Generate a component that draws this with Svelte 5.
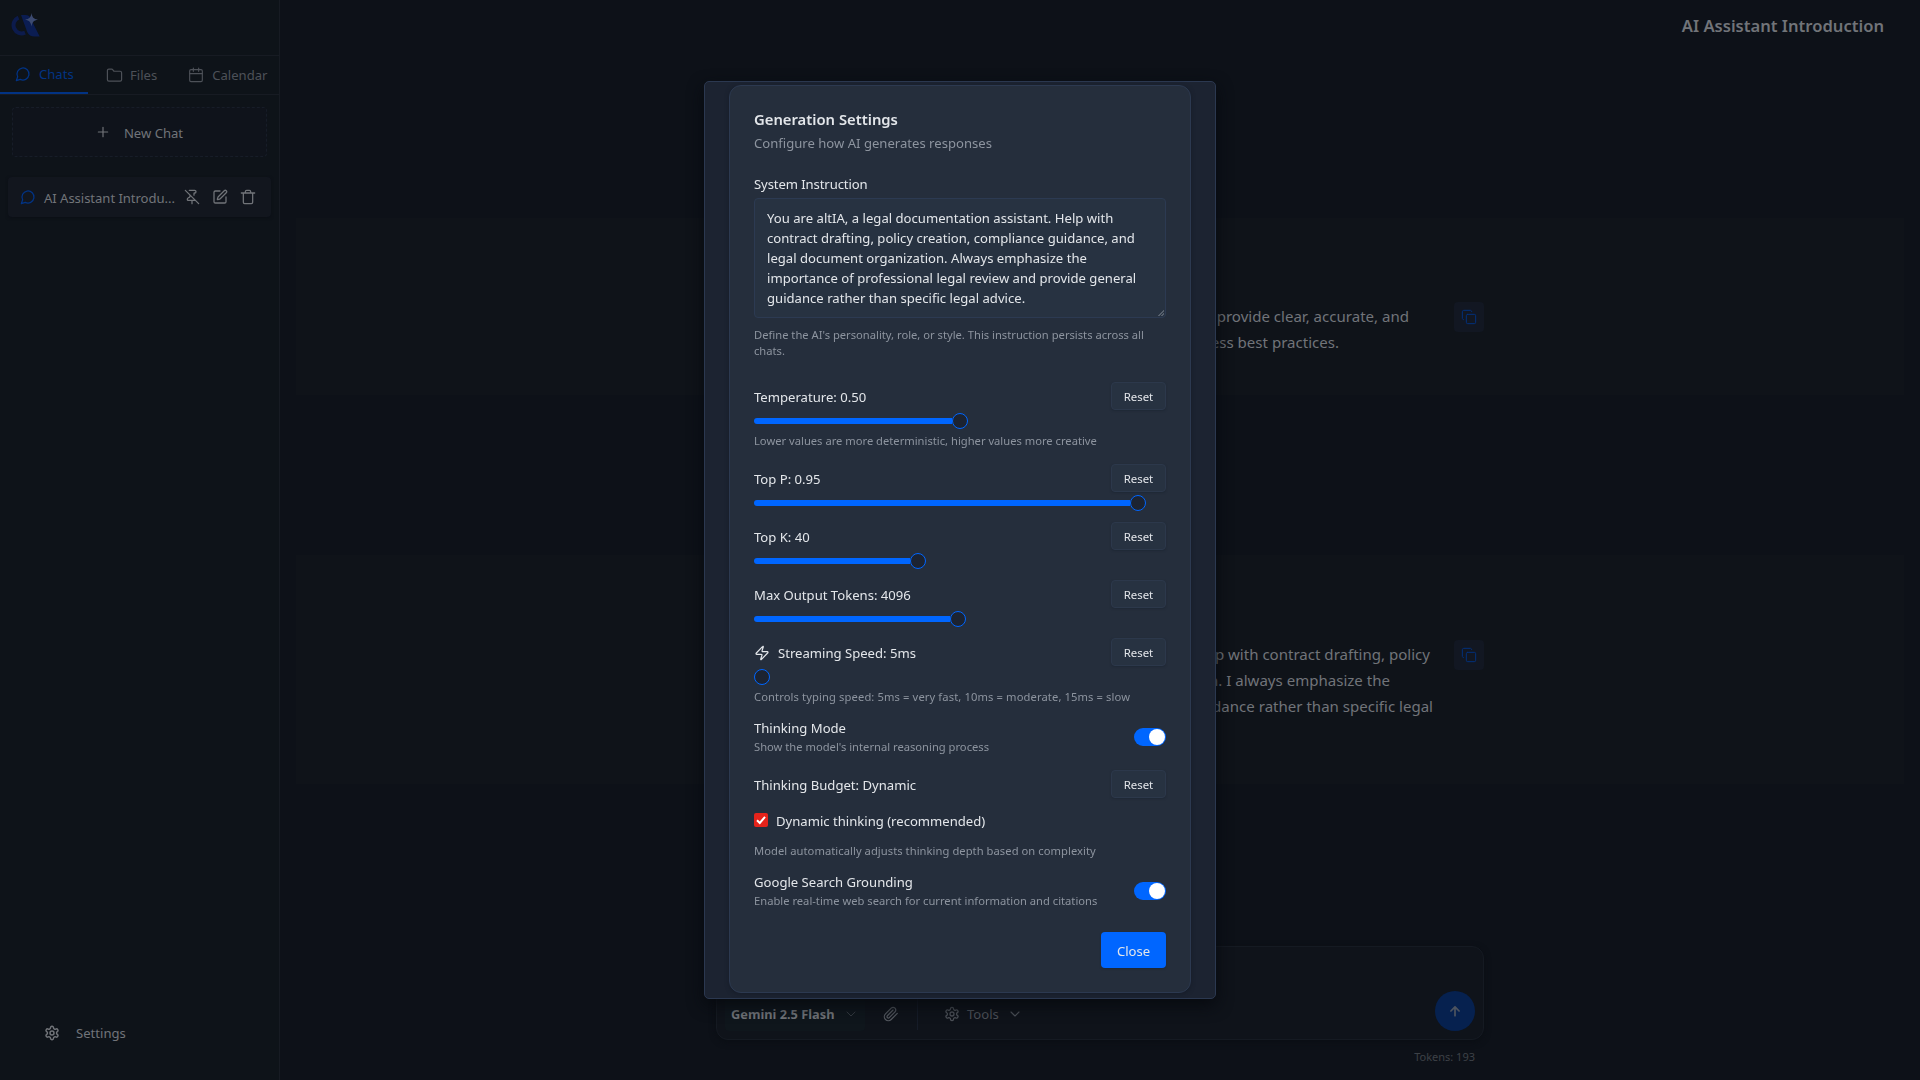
<script>
  const icons = {
    chat: '<path d="M7.9 20A9 9 0 1 0 4 16.1L2 22Z"/>',
    folder: '<path d="M20 20a2 2 0 0 0 2-2V8a2 2 0 0 0-2-2h-7.9a2 2 0 0 1-1.69-.9L9.6 3.9A2 2 0 0 0 7.93 3H4a2 2 0 0 0-2 2v13a2 2 0 0 0 2 2Z"/>',
    calendar: '<path d="M8 1.500v5M16 1.500v5"/><rect x="2.500" y="4" width="19" height="18" rx="2"/><path d="M2.500 10h19"/>',
    plus: '<path d="M4 12h16M12 4v16"/>',
    pinOff: '<path d="M12 17v5M15 9.340V7a1 1 0 0 1 1-1 2 2 0 0 0 0-4H7.890M2 2l20 20M9 9v1.760a2 2 0 0 1-1.110 1.790l-1.780.9A2 2 0 0 0 5 15.240V16a1 1 0 0 0 1 1h11"/>',
    edit: '<path d="M12 3H5a2 2 0 0 0-2 2v14a2 2 0 0 0 2 2h14a2 2 0 0 0 2-2v-7"/><path d="M18.375 2.625a1 1 0 0 1 3 3l-9.013 9.014a2 2 0 0 1-.853.505l-2.873.84a.5.5 0 0 1-.62-.62l.84-2.873a2 2 0 0 1 .506-.852z"/>',
    trash: '<path d="M2 6h20M19 6v14a2 2 0 0 1-2 2H7a2 2 0 0 1-2-2V6M8 6V4a2 2 0 0 1 2-2h4a2 2 0 0 1 2 2v2"/>',
    gear: '<path d="M12.220 2h-.44a2 2 0 0 0-2 2v.18a2 2 0 0 1-1 1.730l-.43.25a2 2 0 0 1-2 0l-.15-.08a2 2 0 0 0-2.730.730l-.22.380a2 2 0 0 0 .730 2.730l.15.1a2 2 0 0 1 1 1.720v.510a2 2 0 0 1-1 1.740l-.15.09a2 2 0 0 0-.730 2.730l.22.380a2 2 0 0 0 2.730.730l.15-.08a2 2 0 0 1 2 0l.43.25a2 2 0 0 1 1 1.730V20a2 2 0 0 0 2 2h.44a2 2 0 0 0 2-2v-.18a2 2 0 0 1 1-1.730l.43-.25a2 2 0 0 1 2 0l.15.08a2 2 0 0 0 2.730-.730l.22-.390a2 2 0 0 0-.730-2.730l-.15-.08a2 2 0 0 1-1-1.740v-.5a2 2 0 0 1 1-1.740l.15-.09a2 2 0 0 0 .730-2.730l-.22-.380a2 2 0 0 0-2.730-.730l-.15.08a2 2 0 0 1-2 0l-.43-.25a2 2 0 0 1-1-1.730V4a2 2 0 0 0-2-2z"/><circle cx="12" cy="12" r="3"/>',
    copy: '<rect x="8" y="8" width="14" height="14" rx="2"/><path d="M4 16c-1.100 0-2-.9-2-2V4c0-1.100.9-2 2-2h10c1.100 0 2 .9 2 2"/>',
    down: '<path d="m4 8 8 8 8-8"/>',
    clip: '<path d="m21.440 11.050-9.190 9.190a6 6 0 0 1-8.490-8.490l8.570-8.570A4 4 0 1 1 18 8.840l-8.590 8.570a2 2 0 0 1-2.830-2.830l8.490-8.480"/>',
    up: '<path d="m5 12 7-7 7 7M12 20V5"/>',
    bolt: '<path d="M4 14a1 1 0 0 1-.78-1.630l9.900-10.200a.5.5 0 0 1 .86.460l-1.920 6.020A1 1 0 0 0 13 10h7a1 1 0 0 1 .78 1.630l-9.900 10.200a.5.5 0 0 1-.86-.460l1.920-6.020A1 1 0 0 0 11 14z"/>',
  };

  const sliders = [
    { label: 'Temperature: 0.50', at: 50, help: 'Lower values are more deterministic, higher values more creative' },
    { label: 'Top P: 0.95', at: 95 },
    { label: 'Top K: 40', at: 39.3 },
    { label: 'Max Output Tokens: 4096', at: 49.5 },
    { label: 'Streaming Speed: 5ms', at: 0, icon: true, help: 'Controls typing speed: 5ms = very fast, 10ms = moderate, 15ms = slow' },
  ];

  const prompt = "You are altIA, a legal documentation assistant. Help with contract drafting, policy creation, compliance guidance, and legal document organization. Always emphasize the importance of professional legal review and provide general guidance rather than specific legal advice.";
</script>

{#snippet icon(name, size = 16, weight = 2)}
  <svg width={size} height={size} viewBox="0 0 24 24" fill="none" stroke="currentColor" stroke-width={weight} stroke-linecap="round" stroke-linejoin="round">{@html icons[name]}</svg>
{/snippet}

{#snippet toggleRow(title, text)}
  <div class="toggle-row">
    <div>
      <div class="toggle-title">{title}</div>
      <div class="help">{text}</div>
    </div>
    <span class="switch"></span>
  </div>
{/snippet}

<div class="app">
  <aside>
    <div class="brand">
      <svg width="30" height="26" viewBox="0 0 30 26">
        <path d="M7.500 4.600A8 8 0 0 0 14 19.700" fill="none" stroke="#0c1b4c" stroke-width="4" />
        <path d="M10 2h4.500c2.500 0 4 1 5 3.200L28.700 23.500h-5.200c-3.500 0-5.800-1.200-7.300-4.500Z" fill="#0b1d52" />
        <path d="M20.500 0c.7 4.500 2 5.800 6.500 6.700-4.500.9-5.800 2.300-6.500 6.800-.7-4.500-2-5.900-6.500-6.800 4.500-.9 5.800-2.200 6.500-6.700Z" fill="#3c4a70" />
      </svg>
    </div>
    <nav>
      <span class="tab active">{@render icon('chat', 16, 1.900)}Chats</span>
      <span class="tab files">{@render icon('folder', 17, 1.700)}Files</span>
      <span class="tab">{@render icon('calendar', 16, 1.700)}Calendar</span>
    </nav>
    <div class="new-chat">{@render icon('plus', 14)}<span>New Chat</span></div>
    <div class="chat-item">
      <span class="blue">{@render icon('chat', 16, 1.900)}</span>
      <span class="chat-name">AI Assistant Introdu...</span>
      {@render icon('pinOff', 16, 1.900)}
      {@render icon('edit', 16, 1.900)}
      {@render icon('trash', 16, 1.900)}
    </div>
    <div class="settings">{@render icon('gear', 16, 2.200)}Settings</div>
  </aside>

  <main>
    <h1>AI Assistant Introduction</h1>
    <section class="message first">
      <div class="lines">
        <p class="l1">provide clear, accurate, and</p>
        <p class="l2">business best practices.</p>
      </div>
      <span class="copy">{@render icon('copy', 16, 1.500)}</span>
    </section>
    <section class="message second">
      <div class="lines">
        <p class="l3">Help with contract drafting, policy</p>
        <p class="l4">organization. I always emphasize the</p>
        <p class="l5">guidance rather than specific legal</p>
      </div>
      <span class="copy">{@render icon('copy', 16, 1.500)}</span>
    </section>
    <footer>
      <div class="composer">
        <div class="model">Gemini 2.5 Flash<span>{@render icon('down', 12)}</span></div>
        <span class="clip">{@render icon('clip', 16, 1.900)}</span>
        <span class="divider"></span>
        <div class="tools">{@render icon('gear', 16, 1.900)}<b>Tools</b>{@render icon('down', 12, 2.200)}</div>
        <span class="send">{@render icon('up', 14, 3)}</span>
      </div>
      <div class="tokens">Tokens: 193</div>
    </footer>
  </main>
</div>

<div class="overlay">
  <div class="dialog">
    <div class="card">
      <h2>Generation Settings</h2>
      <p class="sub">Configure how AI generates responses</p>
      <label class="field" for="prompt">System Instruction</label>
      <textarea id="prompt" spellcheck="false" value={prompt}></textarea>
      <p class="help intro">Define the AI's personality, role, or style. This instruction persists across all chats.</p>

      {#each sliders as s}
        <div class="setting">
          <div class="row">
            <span class="label">{#if s.icon}{@render icon('bolt', 16, 1.800)}{/if}{s.label}</span>
            <button>Reset</button>
          </div>
          <div class="slider">
            <span class="fill" style="width: calc((100% - 16px) * {s.at / 100})"></span><span class="thumb"></span>
          </div>
          {#if s.help}<p class="help" class:wide={s.icon}>{s.help}</p>{/if}
        </div>
      {/each}

      <div class="thinking">
        {@render toggleRow('Thinking Mode', "Show the model's internal reasoning process")}
      </div>

      <div class="row budget">
        <span class="label">Thinking Budget: Dynamic</span>
        <button>Reset</button>
      </div>
      <div class="check">
        <span class="box"><svg width="14" height="14" viewBox="0 0 14 14" fill="none" stroke="#fff" stroke-width="2"><path d="m3 7.200 2.800 2.800L11 3.800" /></svg></span>
        Dynamic thinking (recommended)
      </div>
      <p class="help auto">Model automatically adjusts thinking depth based on complexity</p>

      {@render toggleRow('Google Search Grounding', 'Enable real-time web search for current information and citations')}

      <div class="actions"><button class="close">Close</button></div>
    </div>
  </div>
</div>

<style>
  :global(body) { background: #0d1118; overflow: hidden; }
  * { box-sizing: border-box; margin: 0; }
  svg { flex: none; display: block; }
  .app { display: grid; grid-template-columns: 280px 1fr; height: 1080px; font: 13.1px/20px "Noto Sans", sans-serif; color: #717479; }

  aside { display: flex; flex-direction: column; background: #0e1319; border-right: 1px solid #171b23; min-width: 0; }
  .brand { height: 56px; padding: 13px 0 0 11px; border-bottom: 1px solid #171b23; }
  nav { display: flex; height: 39px; border-bottom: 1px solid #171b23; color: #4d5158; }
  .tab { display: flex; align-items: center; gap: 8px; padding: 0 0 0 18px; }
  .tab.active { width: 88px; padding-left: 15px; color: #023384; border-bottom: 2px solid #023384; }
  .tab.files { padding-right: 13px; gap: 7px; }
  .new-chat { display: flex; align-items: center; justify-content: center; gap: 14px; height: 50px; margin: 12px 12px 0; border: 1px dashed #171d28; border-radius: 4px; background: #0f131b; }
  .new-chat span { padding-top: 1px; }
  .chat-item { display: flex; align-items: center; gap: 12px; height: 40px; margin: 20px 8px 0; padding-left: 12px; border-radius: 4px; background: #12161e; box-shadow: 0 1px 3px #0b0f15; }
  .blue { color: #023384; }
  .chat-name { width: 128px; margin-left: -4px; padding-top: 2px; white-space: nowrap; letter-spacing: -.05px; }
  .settings { display: flex; align-items: center; gap: 16px; margin-top: auto; padding: 0 0 37px 44px; }

  main { display: flex; flex-direction: column; min-width: 0; }
  h1 { height: 218px; padding: 14px 36px 0 0; font-size: 16.600px; line-height: 24px; font-weight: 600; text-align: right; }
  .message { display: flex; justify-content: flex-end; margin: 0 16px; padding-right: 420px; background: #0f1319; }
  .first { height: 177px; padding-top: 84px; }
  .second { height: 229px; margin-top: 160px; padding-top: 85px; }
  .lines { width: 700px; margin-right: 20px; padding-top: 1px; font-size: 15.050px; line-height: 26px; text-align: right; }
  .lines p { white-space: nowrap; }
  .l1 { padding-right: 25px; }
  .l2 { padding-right: 95px; }
  .l3 { padding-right: 4px; }
  .l4 { padding-right: 44px; }
  .l5 { padding-right: 1px; }
  .copy { display: grid; place-items: center; width: 30px; height: 30px; border-radius: 4px; background: #121722; color: #02317c; }
  footer { margin: auto 0 0; padding-left: 436px; height: 134px; }
  .composer { display: flex; align-items: center; width: 768px; height: 94px; padding: 42px 8px 0; border: 1px solid #151a22; border-radius: 12px; background: #0f131a; box-shadow: 0 2px 6px #0a0e14; }
  .model { display: flex; align-items: center; justify-content: space-between; width: 140px; height: 34px; padding: 0 8px 0 6px; border-radius: 4px; background: #0f161c; font-weight: 700; font-size: 12.800px; }
  .model span { color: #353a41; }
  .clip { margin-left: 18px; color: #555960; }
  .divider { width: 1px; height: 32px; margin: 0 26px 0 18px; background: #161c28; }
  .tools { display: flex; align-items: center; color: #4d5158; }
  .tools b { margin: 0 10px 0 7px; font-weight: 400; }
  .send { display: grid; place-items: center; width: 40px; height: 40px; margin: -6px 0 0 auto; border-radius: 50%; background: #06214f; color: #4c535f; }
  .tokens { width: 759px; margin-top: 7px; font-size: 11px; text-align: right; color: #3d4147; }

  .overlay { position: fixed; inset: 0; display: grid; place-items: center; font: 13.1px/20px "Noto Sans", sans-serif; color: #e3e6ea; }
  .dialog { width: 512px; height: 918px; padding: 3px 24px; border: 1px solid #2b3850; border-radius: 5px; background: #1c2331; box-shadow: 0 6px 16px #070a0f; }
  .card { height: 908px; padding: 21px 24px 0; border: 1px solid #2c3950; border-radius: 12px; background: #252e3c; box-shadow: 0 1px 4px #161c28; }
  h2 { font-size: 14.800px; line-height: 25px; font-weight: 600; }
  .sub { line-height: 22px; color: #8d949f; }
  .field { display: block; margin-top: 20px; letter-spacing: -.1px; }
  textarea { display: block; width: 412px; height: 120px; margin-top: 4px; padding: 9px 12px; overflow: hidden; border: 1px solid #2c3a52; border-radius: 4px; background: #273241; color: inherit; font: inherit; letter-spacing: .01px; resize: vertical; outline: none; }
  textarea::-webkit-resizer { background: linear-gradient(135deg, transparent 48%, #56606d 48% 60%, transparent 60% 74%, #56606d 74% 86%, transparent 86%) right 1px bottom 1px / 6px 6px no-repeat; }
  .help { font-size: 11.200px; line-height: 16px; color: #8d949f; }
  .intro { height: 55px; margin-bottom: 9px; padding-top: 9px; }
  .setting { padding-bottom: 11px; }
  .setting:has(.help) { padding-bottom: 15px; }
  .row { display: flex; align-items: center; justify-content: space-between; height: 28px; }
  .label { display: flex; align-items: center; gap: 8px; padding-top: 2px; }
  button { width: 55px; height: 28px; padding: 1px 0 0; border: 1px solid #2c384b; border-radius: 4px; background: #273241; color: inherit; font: 11.400px/20px "Noto Sans", sans-serif; box-shadow: 0 1px 2px #1f2835; }
  .slider { display: flex; align-items: center; height: 16px; margin-top: 3px; }
  .setting:has(.help) .slider { margin-bottom: 4px; }
  .wide { letter-spacing: .11px; }
  .fill { height: 6px; border-radius: 3px 0 0 3px; background: #0066ff; }
  .thumb { width: 16px; height: 16px; border: 1px solid #0066ff; border-radius: 50%; background: #1c2331; }
  .toggle-row { display: flex; align-items: center; justify-content: space-between; height: 36px; }
  .toggle-title { height: 20px; line-height: 18px; }
  .switch { display: flex; justify-content: flex-end; width: 32px; height: 18px; padding: 1px; border-radius: 9px; background: #0066ff; }
  .switch::after { content: ""; width: 16px; height: 16px; border-radius: 50%; background: #fff; }
  .thinking { margin-top: -1px; }
  .budget { margin-top: 15px; }
  .check { display: flex; gap: 8px; height: 20px; margin-top: 14px; line-height: 18px; }
  .box { width: 14px; height: 14px; margin-top: 1px; border-radius: 2px; background: #e5231b; }
  .auto { margin: 11px 0 14px; letter-spacing: .05px; }
  .actions { display: flex; justify-content: flex-end; margin-top: 23px; }
  .close { width: 65px; height: 36px; padding-top: 2px; border: 0; background: #0066ff; font-size: 13.100px; }
</style>
